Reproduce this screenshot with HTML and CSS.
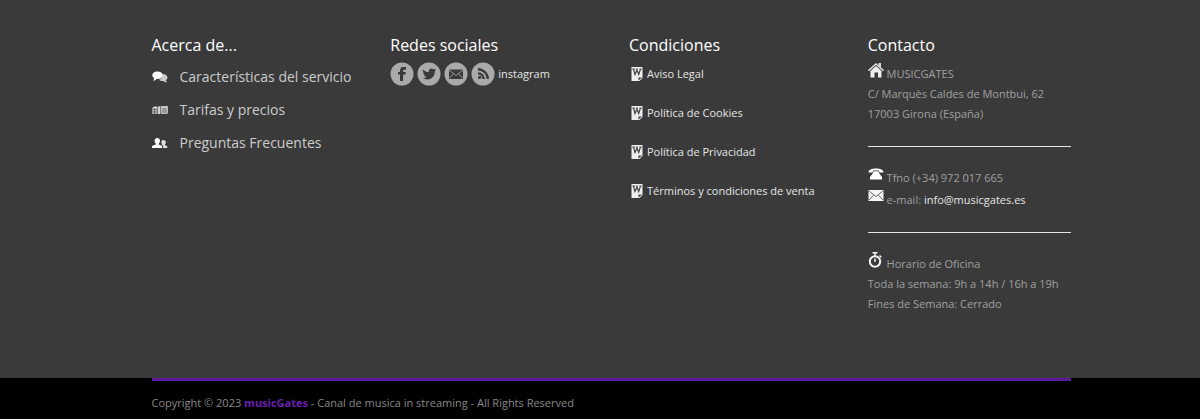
FILE: index.html
```html
<!DOCTYPE html>
<html lang="es">
<head>
    <meta charset="UTF-8">
    <meta name="viewport" content="width=device-width, initial-scale=1.0">
    <title>musicGates</title>
    <link rel="stylesheet" href="styles.css">
</head>
<body>
    <svg class="sprite" aria-hidden="true">
        <symbol id="word" viewBox="0 0 12 14">
            <path fill="#eee" d="M.5 0h11v11l-3 3h-8z"/>
            <path fill="none" stroke="#3a3a3a" stroke-width="1.100" d="M2.500 2l1.500 5.500L6 3l1.700 4.500L9.500 2"/>
            <path stroke="#3a3a3a" stroke-width=".8" d="M1.200 2h3M5 2h2M8.300 2h2.500"/>
            <path fill="#3a3a3a" d="M7.500 13.500v-3H11z"/>
        </symbol>
    </svg>

    <footer>
        <div class="container columns">
            <section>
                <h2>Acerca de...</h2>
                <ul class="about">
                    <li>
                        <svg class="icon" viewBox="0 0 16 12">
                            <path fill="#ccc" d="M10 3c3 0 5.500 1.500 5.500 3.600 0 1.200-.6 2-1.600 2.600.1.900.5 1.700 1.100 2.300-1.500 0-2.700-.7-3.500-1.500-2 .1-3.700-.3-4.700-1.300C9.500 8.300 11 6 10 3z"/>
                            <path fill="#fff" d="M5.500.5c3 0 5.200 1.600 5.200 3.800S8.500 8 5.500 8l-1-.1C3.700 8.900 2.600 9.600 1 9.700c.7-.8 1.100-1.600 1.100-2.500C1 6.500.3 5.500.3 4.300.3 2.100 2.600.5 5.500.5z"/>
                        </svg>
                        <a href="#">Características del servicio</a>
                    </li>
                    <li>
                        <svg class="icon" viewBox="0 0 16 12">
                            <path fill="#bbb" d="M2 2.500h3.500V10H0V4.500zM6 2.500l2.500-.5V10H6zM9 2c2.200.8 4.500.2 7 0v7.500c-2.500.5-4.800.8-7 .3z"/>
                            <path stroke="#555" stroke-width=".6" d="M0 5.500h5M0 7.300h5M0 9h5M2.500 3.500V10M10.500 4.500h4M10 6.300h5M10 8h5"/>
                            <path stroke="#e5e5e5" d="M7.200 3v7M1.500 3.500h3M10 3h5"/>
                        </svg>
                        <a href="#">Tarifas y precios</a>
                    </li>
                    <li>
                        <svg class="icon" viewBox="0 0 16 12">
                            <path fill="#fff" d="M5.300 1C7 1 8 2.200 8 3.800c0 1.200-.5 2.200-1.200 2.700v1c1.500.7 3.200 1 3.200 2V11H0V9.500c0-1 2.300-1.300 3.800-2v-1C3 6 2.600 5 2.600 3.800 2.600 2.200 3.600 1 5.300 1z"/>
                            <path fill="#ddd" d="M11.500 3c1.500 0 2.400 1 2.400 2.300 0 .9-.4 1.600-1 2.100v.8c1.200.5 2.400.7 2.400 1.400V11H11V9.200c0-.9-1-1.300-1.800-1.700l1-.3C8.500 5.500 9.300 3 11.500 3z"/>
                        </svg>
                        <a href="#">Preguntas Frecuentes</a>
                    </li>
                </ul>
            </section>

            <section>
                <h2>Redes sociales</h2>
                <div class="social">
                    <a href="#" aria-label="Facebook">
                        <svg viewBox="0 0 24 24">
                            <circle cx="12" cy="12" r="11.500"/>
                            <path d="M10 19v-6.500H8V10h2V8.500C10 6.200 11.300 5 13.300 5H16v2.700h-1.500c-1 0-1.400.3-1.400 1.100V10h2.800l-.4 2.500h-2.400V19z"/>
                        </svg>
                    </a>
                    <a href="#" aria-label="Twitter">
                        <svg viewBox="0 0 24 24">
                            <circle cx="12" cy="12" r="11.500"/>
                            <path d="M6 7.500c1.500 1.700 3.500 2.500 5.700 2.600C11.500 8 12.800 6.500 14.600 6.500c.9 0 1.600.3 2.100.9l2-.7-1 1.600 1.500-.2-1.400 1.500c.1 4.400-2.900 7.900-7.300 7.900-1.800 0-3.400-.5-4.700-1.400 1.500.1 2.800-.3 3.900-1.100-1.300-.1-2.200-.8-2.600-1.900h1.200c-1.400-.4-2.200-1.400-2.200-2.700l1.200.2C6 9.900 5.500 8.800 6 7.500z"/>
                        </svg>
                    </a>
                    <a href="#" aria-label="Correo">
                        <svg viewBox="0 0 24 24">
                            <circle cx="12" cy="12" r="11.500"/>
                            <path d="M5 7.500h14V17H5z"/>
                            <path class="line" d="M5 8l7 5.500L19 8M5 16.500l4.500-4.800M19 16.500l-4.500-4.800"/>
                        </svg>
                    </a>
                    <a href="#" aria-label="RSS">
                        <svg viewBox="0 0 24 24">
                            <circle cx="12" cy="12" r="11.500"/>
                            <path d="M7 6c6 0 11 5 11 11h-2.400c0-4.700-3.900-8.600-8.600-8.600zM7 10.200c3.800 0 6.800 3 6.800 6.800h-2.400c0-2.400-2-4.400-4.400-4.400zM8.600 13.800a1.600 1.600 0 1 1 0 3.200 1.600 1.600 0 0 1 0-3.200z"/>
                        </svg>
                    </a>
                    <a href="#">instagram</a>
                </div>
            </section>

            <section>
                <h2>Condiciones</h2>
                <ul class="terms">
                    <li><svg><use href="#word"/></svg><a href="#">Aviso Legal</a></li>
                    <li><svg><use href="#word"/></svg><a href="#">Política de Cookies</a></li>
                    <li><svg><use href="#word"/></svg><a href="#">Política de Privacidad</a></li>
                    <li><svg><use href="#word"/></svg><a href="#">Términos y condiciones de venta</a></li>
                </ul>
            </section>

            <section class="contact">
                <h2>Contacto</h2>
                <p>
                    <svg viewBox="0 0 16 16">
                        <path fill="#eee" d="M2.500 9L8 4l5.500 5v6.500H10V10.500H6.500v5h-4z"/>
                        <path fill="none" stroke="#ddd" stroke-width="1.600" d="M.5 8.700L8 2l7.500 6.700"/>
                        <path fill="#ddd" d="M10.500 1H13v4.500l-2.500-2z"/>
                    </svg>
                    MUSICGATES<br>
                    C/ Marquès Caldes de Montbui, 62<br>
                    17003 Girona (España)
                </p>
                <hr>
                <p>
                    <svg viewBox="0 0 16 16">
                        <path fill="#fff" d="M.5 6.500C.5 3.500 4 2.500 8 2.500s7.500 1 7.500 4h-4l-.6-2H5.100l-.6 2z"/>
                        <path fill="#fff" d="M5.500 5.300h5l.5 1.700 3 4v2.500H2V11l3-4z"/>
                    </svg>
                    Tfno (+34) 972 017 665<br>
                    <svg viewBox="0 0 16 16">
                        <path fill="#f5f5f5" d="M.5 2h15v11H.5z"/>
                        <path fill="none" stroke="#666" d="M1 3l7 5.500L15 3M1 12l4.500-4.700M15 12l-4.500-4.700"/>
                    </svg>
                    e-mail: <a href="mailto:info@musicgates.es">info@musicgates.es</a>
                </p>
                <hr>
                <p>
                    <svg viewBox="0 0 16 16">
                        <circle cx="7" cy="9.500" r="5.200" fill="none" stroke="#f5f5f5" stroke-width="2"/>
                        <path fill="none" stroke="#f5f5f5" stroke-width="1.500" d="M4.500.8h5M7 1v3M11.500 3.500l1.800 1.800M7 6.500V10"/>
                    </svg>
                    Horario de Oficina<br>
                    Toda la semana: 9h a 14h / 16h a 19h<br>
                    Fines de Semana: Cerrado
                </p>
            </section>
        </div>

        <div class="bottom">
            <div class="container">
                <p class="copyright">Copyright © 2023 <a href="#">musicGates</a> - Canal de musica in streaming - All Rights Reserved</p>
            </div>
        </div>
    </footer>
</body>
</html>
```
FILE: styles.css
```css
body {
    margin: 0;
    background: #000;
    color: #a0a0a0;
    font-family: "Open Sans", sans-serif;
    font-size: 11px;
    line-height: 20px;
}
a {
    color: #e6e6e6;
    text-decoration: none;
}
.sprite {
    position: absolute;
    width: 0;
    height: 0;
}
footer {
    background: #3a3a3a;
}
.container {
    max-width: 919px;
    margin: 0 auto;
    padding-left: 22px;
}
.columns {
    display: grid;
    grid-template-columns: repeat(4, 1fr);
    gap: 36px;
    padding-top: 34px;
    padding-bottom: 64px;
}
h2 {
    margin: 0 0 6px;
    color: #fff;
    font-size: 16px;
    font-weight: 400;
    line-height: 22px;
}
ul {
    margin: 0;
    padding: 0;
    list-style: none;
}
.about {
    margin-top: -2px;
}
.about li {
    display: flex;
    align-items: center;
    gap: 12px;
    height: 33px;
    font-size: 14px;
    white-space: nowrap;
}
.about a {
    color: #ccc;
}
.about .icon {
    width: 16px;
    height: 12px;
}
.social {
    display: flex;
    align-items: center;
    gap: 3px;
}
.social svg {
    display: block;
    width: 24px;
    height: 24px;
    fill: #3a3a3a;
}
.social circle {
    fill: #aaa;
}
.social .line {
    fill: none;
    stroke: #999;
}
.terms {
    padding-top: 2px;
}
.terms li {
    display: flex;
    align-items: center;
    gap: 4px;
    height: 20px;
    margin-bottom: 19px;
    padding-left: 2px;
    white-space: nowrap;
}
.terms svg {
    width: 12px;
    height: 14px;
}
.contact p {
    margin: 0;
}
.contact p svg {
    width: 16px;
    height: 16px;
    vertical-align: baseline;
}
hr {
    height: 1px;
    margin: 22px 0 19px;
    border: 0;
    background: #e6e6e6;
}
.bottom {
    background: #000;
}
.copyright {
    margin: 0;
    padding: 12px 0 6px;
    border-top: 3px solid #5a189a;
    color: #888;
}
.copyright a {
    color: #6a1fb0;
    font-weight: 700;
}
```
